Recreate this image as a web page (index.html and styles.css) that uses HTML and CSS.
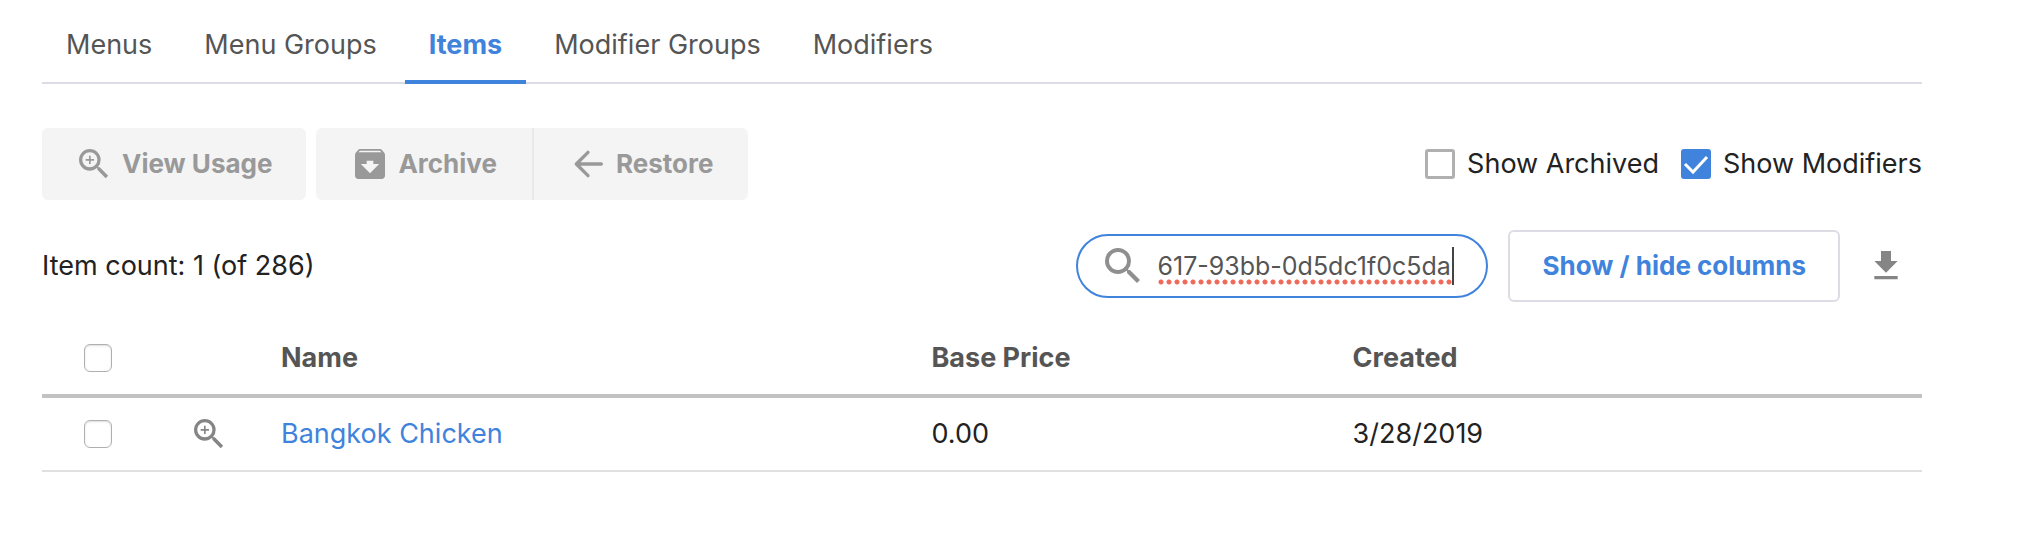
FILE: index.html
```
<!DOCTYPE html>
<html lang="en">
<head>
  <meta charset="utf-8">
  <title>Items</title>
  <link rel="stylesheet" href="styles.css">
</head>
<body>
  <div class="page">
    <nav class="tabs">
      <a href="#menus" class="tab">Menus</a>
      <a href="#menu-groups" class="tab">Menu Groups</a>
      <a href="#items" class="tab active">Items</a>
      <a href="#modifier-groups" class="tab">Modifier Groups</a>
      <a href="#modifiers" class="tab">Modifiers</a>
    </nav>

    <div class="actions">
      <button type="button" class="btn" disabled>
        <svg class="icon" viewBox="0 0 24 24"><path d="M15.5 14h-.79l-.28-.27A6.47 6.47 0 0 0 16 9.500 6.500 6.500 0 1 0 9.500 16c1.610 0 3.090-.59 4.230-1.570l.27.28v.79l5 4.990L20.490 19l-4.990-5zm-6 0C7.010 14 5 11.990 5 9.500S7.010 5 9.500 5 14 7.010 14 9.500 11.990 14 9.500 14z"/><path d="M12 10h-2v2H9v-2H7V9h2V7h1v2h2v1z"/></svg>
        View Usage
      </button>
      <div class="btn-group">
        <button type="button" class="btn" disabled>
          <svg class="icon" viewBox="0 0 24 24"><path d="M20.540 5.230l-1.390-1.680C18.880 3.210 18.470 3 18 3H6c-.47 0-.88.21-1.160.55L3.460 5.230C3.170 5.570 3 6.020 3 6.500V19c0 1.100.9 2 2 2h14c1.100 0 2-.9 2-2V6.500c0-.48-.17-.93-.46-1.270zM12 17.500L6.500 12H10v-2h4v2h3.500L12 17.500zM5.120 5l.81-1h12l.94 1H5.120z"/></svg>
          Archive
        </button>
        <button type="button" class="btn" disabled>
          <svg class="icon line" viewBox="0 0 24 24"><path d="M20 12H5M12 5l-7 7 7 7"/></svg>
          Restore
        </button>
      </div>
      <div class="filters">
        <label class="filter"><input type="checkbox" class="check"> Show Archived</label>
        <label class="filter"><input type="checkbox" class="check" checked> Show Modifiers</label>
      </div>
    </div>

    <div class="toolbar">
      <span class="count">Item count: 1 (of 286)</span>
      <div class="search">
        <svg class="icon search-icon" viewBox="0 0 24 24"><path d="M15.500 14h-.79l-.28-.27A6.470 6.470 0 0 0 16 9.500 6.500 6.500 0 1 0 9.500 16c1.610 0 3.090-.59 4.230-1.570l.27.28v.79l5 4.990L20.490 19l-4.990-5zm-6 0C7.010 14 5 11.990 5 9.500S7.010 5 9.500 5 14 7.010 14 9.500 11.990 14 9.500 14z"/></svg>
        <input type="text" class="search-input" aria-label="Search items" value="617-93bb-0d5dc1f0c5da">
      </div>
      <button type="button" class="columns-btn">Show / hide columns</button>
      <button type="button" class="icon-btn" aria-label="Download">
        <svg class="icon" viewBox="0 0 24 24"><path d="M19 9h-4V3H9v6H5l7 7 7-7zM5 18v2h14v-2H5z"/></svg>
      </button>
    </div>

    <table class="items">
      <thead>
        <tr>
          <th class="col-check"><input type="checkbox" class="row-check" aria-label="Select all"></th>
          <th class="col-usage"></th>
          <th class="col-name">Name</th>
          <th class="col-price">Base Price</th>
          <th>Created</th>
        </tr>
      </thead>
      <tbody>
        <tr>
          <td class="col-check"><input type="checkbox" class="row-check" aria-label="Select Bangkok Chicken"></td>
          <td>
            <button type="button" class="icon-btn" aria-label="View usage">
              <svg class="icon" viewBox="0 0 24 24"><path d="M15.500 14h-.79l-.28-.27A6.470 6.470 0 0 0 16 9.500 6.500 6.500 0 1 0 9.500 16c1.610 0 3.090-.59 4.230-1.570l.27.28v.79l5 4.990L20.490 19l-4.990-5zm-6 0C7.010 14 5 11.990 5 9.500S7.010 5 9.500 5 14 7.010 14 9.500 11.990 14 9.500 14z"/><path d="M12 10h-2v2H9v-2H7V9h2V7h1v2h2v1z"/></svg>
            </button>
          </td>
          <td><a href="#bangkok-chicken">Bangkok Chicken</a></td>
          <td>0.00</td>
          <td>3/28/2019</td>
        </tr>
      </tbody>
    </table>
  </div>
</body>
</html>
```
FILE: styles.css
```
* {
  box-sizing: border-box;
}

body {
  margin: 0;
  background-color: #fff;
  color: #222;
  font-family: Inter, Arial, sans-serif;
  font-size: 27px;
  line-height: 36px;
}

button,
input {
  font: inherit;
}

a {
  color: #4083dc;
  text-decoration: none;
}

.page {
  padding: 0 104px 0 42px;
}

.tabs {
  display: flex;
  gap: 4px;
  height: 84px;
  box-shadow: inset 0 -2px #dcdce4;
}

.tab {
  padding: 27px 24px 0;
  color: #555;
}

.tab.active {
  border-bottom: 4px solid #4083dc;
  color: #4083dc;
  font-weight: bold;
}

.actions {
  display: flex;
  align-items: center;
  gap: 10px;
  margin-top: 44px;
}

.btn {
  display: flex;
  align-items: center;
  gap: 8px;
  height: 72px;
  padding: 0 34px 0 32px;
  border: none;
  border-radius: 6px;
  background-color: #f4f4f4;
  color: #999;
  font-size: 26px;
  font-weight: bold;
}

.btn-group {
  display: flex;
}

.btn-group .btn {
  padding: 0 35px 0 34px;
}

.btn-group .btn:first-child {
  border-radius: 6px 0 0 6px;
}

.btn-group .btn:last-child {
  border-left: 2px solid #e9e9e9;
  border-radius: 0 6px 6px 0;
}

.icon {
  display: block;
  width: 40px;
  height: 40px;
  flex: none;
  fill: currentColor;
}

.icon.line {
  fill: none;
  stroke: currentColor;
  stroke-width: 2;
  stroke-linecap: round;
  stroke-linejoin: round;
}

.filters {
  display: flex;
  gap: 22px;
  margin-left: auto;
}

.filter {
  display: flex;
  align-items: center;
  gap: 12px;
}

.check {
  appearance: none;
  width: 30px;
  height: 30px;
  margin: 0;
  border: 3px solid #b0b0b0;
  border-radius: 3px;
}

.check:checked {
  border: none;
  background: #4083dc url("data:image/svg+xml,%3Csvg xmlns='http://www.w3.org/2000/svg' viewBox='0 0 30 30'%3E%3Cpath d='M4 15l8 8L26 8' fill='none' stroke='white' stroke-width='3'/%3E%3C/svg%3E");
}

.toolbar {
  display: flex;
  align-items: center;
  margin-top: 30px;
}

.count {
  margin-right: auto;
}

.search {
  display: flex;
  align-items: center;
  gap: 10px;
  width: 412px;
  height: 64px;
  padding: 0 32px 0 21px;
  border: 2px solid #4083dc;
  border-radius: 32px;
}

.search-icon {
  width: 48px;
  height: 48px;
  color: #8f8f8f;
}

/* dotted spelling mark under the text, caret on the right edge */
.search-input {
  flex: 1;
  min-width: 0;
  height: 38px;
  padding: 0;
  border: none;
  border-right: 2px solid #444;
  outline: none;
  background: radial-gradient(circle, #ee6a5c 2px, transparent 3px) left bottom / 8px 6px repeat-x;
  color: #555;
  font-size: 25px;
}

.columns-btn {
  height: 72px;
  margin: 0 26px 0 20px;
  padding: 0 32px;
  border: 2px solid #dcdce4;
  border-radius: 6px;
  background-color: #fff;
  color: #4083dc;
  font-size: 26px;
  font-weight: bold;
}

.icon-btn {
  display: block;
  padding: 0;
  border: none;
  background: none;
  color: #858585;
}

.toolbar .icon-btn {
  margin-right: 16px;
}

.items {
  width: 100%;
  margin-top: 20px;
  border-spacing: 0;
  table-layout: fixed;
}

.items th,
.items td {
  height: 74px;
  padding: 0;
  text-align: left;
  border-bottom: 2px solid #e0e0e0;
}

.items th {
  height: 76px;
  border-bottom: 4px solid #c2c2c2;
  color: #555;
}

.items .col-check {
  width: 147px;
  padding-left: 42px;
}

.col-usage {
  width: 92px;
}

.col-name {
  width: 34.6%;
}

.col-price {
  width: 22.4%;
}

.row-check {
  appearance: none;
  display: block;
  width: 28px;
  height: 28px;
  margin: 0;
  border: 1px solid #b0b0b0;
  border-radius: 6px;
  box-shadow: inset 0 1px 2px #ddd;
}
```
